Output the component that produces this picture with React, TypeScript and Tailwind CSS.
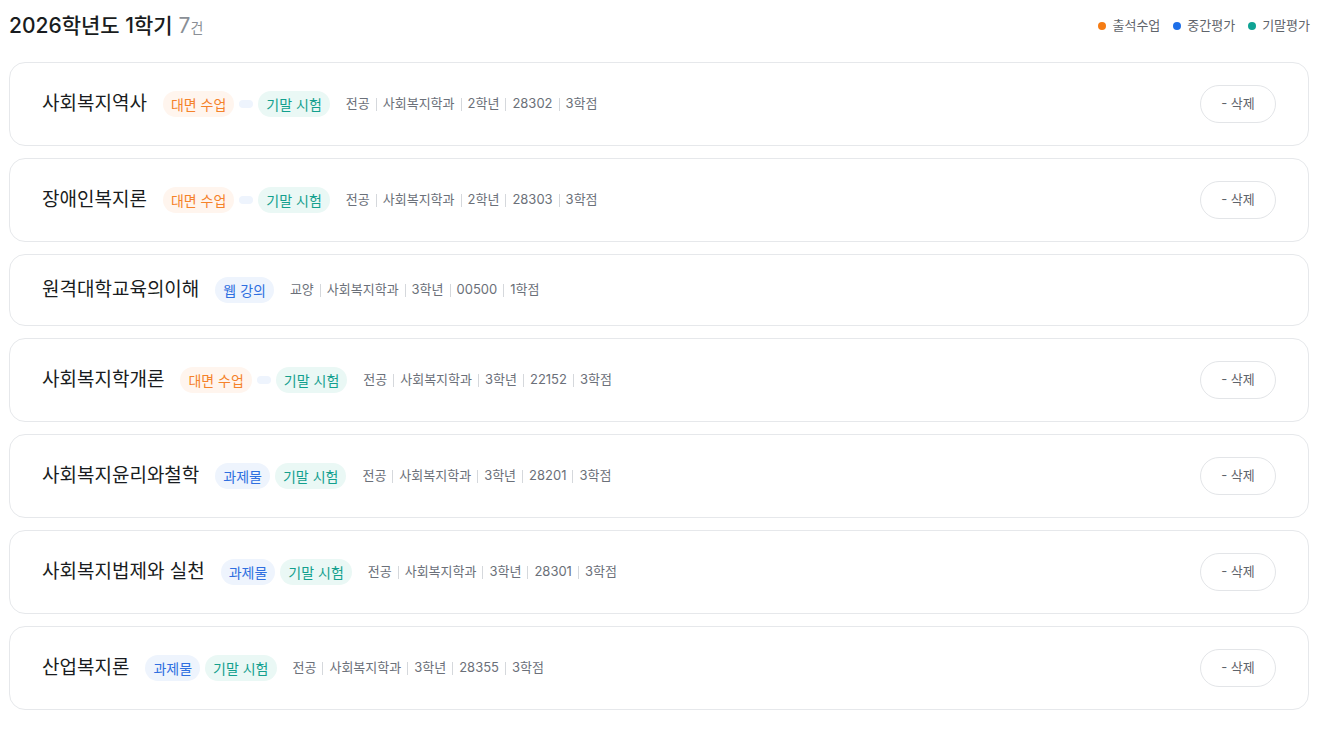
import React from "react";

type Tag = "face" | "final" | "mid" | "task" | "web";

interface Course {
  name: string;
  tags: Tag[];
  meta: string[];
  deletable: boolean;
}

const courses: Course[] = [
  { name: "사회복지역사", tags: ["face", "mid", "final"], meta: ["전공", "사회복지학과", "2학년", "28302", "3학점"], deletable: true },
  { name: "장애인복지론", tags: ["face", "mid", "final"], meta: ["전공", "사회복지학과", "2학년", "28303", "3학점"], deletable: true },
  { name: "원격대학교육의이해", tags: ["web"], meta: ["교양", "사회복지학과", "3학년", "00500", "1학점"], deletable: false },
  { name: "사회복지학개론", tags: ["face", "mid", "final"], meta: ["전공", "사회복지학과", "3학년", "22152", "3학점"], deletable: true },
  { name: "사회복지윤리와철학", tags: ["task", "final"], meta: ["전공", "사회복지학과", "3학년", "28201", "3학점"], deletable: true },
  { name: "사회복지법제와 실천", tags: ["task", "final"], meta: ["전공", "사회복지학과", "3학년", "28301", "3학점"], deletable: true },
  { name: "산업복지론", tags: ["task", "final"], meta: ["전공", "사회복지학과", "3학년", "28355", "3학점"], deletable: true },
];

function Badge({ tag }: { tag: Tag }) {
  if (tag === "mid") {
    // 중간평가 없음 — 빈 뱃지
    return <span className="inline-block w-[14px] h-[8px] rounded-full bg-[#eef4fd]" />;
  }
  const styles: Record<string, string> = {
    face: "bg-[#fff5ee] text-[#f5822a]",
    final: "bg-[#eaf8f5] text-[#13a08e]",
    task: "bg-[#eef4fd] text-[#2f6fe0]",
    web: "bg-[#eef4fd] text-[#2f6fe0]",
  };
  const labels: Record<string, string> = {
    face: "대면 수업",
    final: "기말 시험",
    task: "과제물",
    web: "웹 강의",
  };
  return (
    <span className={`inline-flex items-center h-[26px] px-[8px] rounded-full text-[14px] ${styles[tag]}`}>
      {labels[tag]}
    </span>
  );
}

function CourseCard({ course }: { course: Course }) {
  return (
    <div className="flex items-center justify-between border border-[#e6e8eb] rounded-[16px] bg-white px-[32px] py-[22px]">
      <div className="flex items-center h-[26px]">
        <span className="text-[19px] leading-[26px] text-[#191c20] mr-[16px]">{course.name}</span>
        <div className="flex items-center gap-[5px] mr-[16px]">
          {course.tags.map((t, i) => (
            <Badge key={i} tag={t} />
          ))}
        </div>
        <div className="flex items-center text-[13px] text-[#6b7079]">
          {course.meta.map((m, i) => (
            <React.Fragment key={i}>
              {i > 0 && <span className="w-px h-[13px] bg-[#d5d8dc] mx-[6px]" />}
              <span>{m}</span>
            </React.Fragment>
          ))}
        </div>
      </div>
      {course.deletable && (
        <button className="w-[76px] h-[38px] rounded-full border border-[#e3e5e8] bg-white text-[13px] text-[#5f646b]">
          - 삭제
        </button>
      )}
    </div>
  );
}

export default function App() {
  return (
    <div
      className="min-h-screen bg-white pt-[12px] pl-[9px]"
      style={{ fontFamily: '"Inter", "Noto Sans CJK KR", sans-serif' }}
    >
      <div className="w-[1300px]">
        {/* 헤더 */}
        <div className="flex items-center justify-between h-[28px] mb-[22px]">
          <div className="flex items-baseline">
            <span className="text-[21px] font-medium text-[#191c20]">2026학년도 1학기</span>
            <span className="text-[21px] text-[#8a8f96] ml-[6px]">7</span>
            <span className="text-[14px] text-[#8a8f96]">건</span>
          </div>
          <div className="flex items-center gap-[13px] text-[13px] text-[#5f646b] mr-[-1px]">
            <div className="flex items-center gap-[6px]">
              <span className="w-[8px] h-[8px] rounded-full bg-[#f57c14]" />
              <span>출석수업</span>
            </div>
            <div className="flex items-center gap-[6px]">
              <span className="w-[8px] h-[8px] rounded-full bg-[#1e6fe8]" />
              <span>중간평가</span>
            </div>
            <div className="flex items-center gap-[6px]">
              <span className="w-[8px] h-[8px] rounded-full bg-[#0fa394]" />
              <span>기말평가</span>
            </div>
          </div>
        </div>

        {/* 과목 목록 */}
        <div className="flex flex-col gap-[12px]">
          {courses.map((c) => (
            <CourseCard key={c.name} course={c} />
          ))}
        </div>
      </div>
    </div>
  );
}
